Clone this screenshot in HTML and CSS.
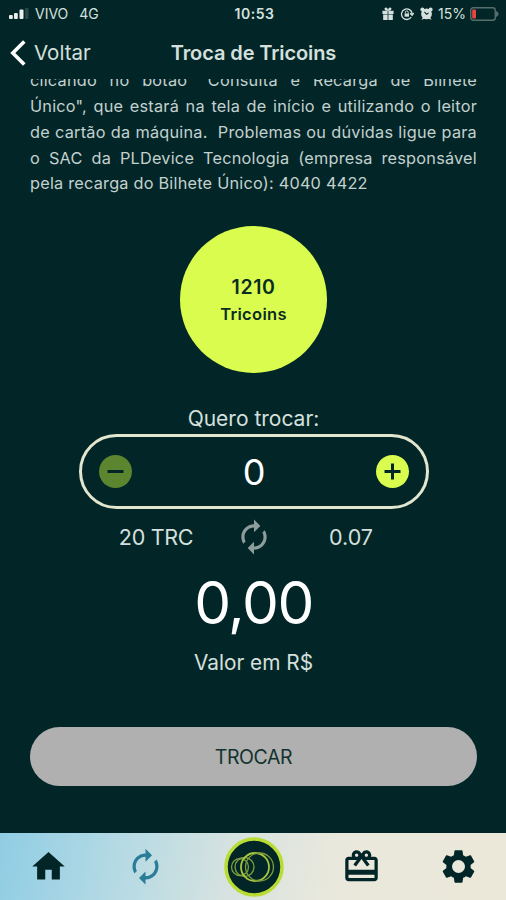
FILE: index.html
```html
<!DOCTYPE html>
<html lang="pt-BR">
<head>
    <meta charset="UTF-8">
    <meta name="viewport" content="width=device-width, initial-scale=1.0">
    <title>Troca de Tricoins</title>
    <link rel="stylesheet" href="styles.css">
</head>
<body>
    <div class="status-bar">
        <div class="status-left">
            <svg class="signal" viewBox="0 0 20 12">
                <rect x="0" y="7" width="3.8" height="4" rx="1" fill="#e8f0ee"/>
                <rect x="5" y="5" width="3.8" height="6" rx="1" fill="#e8f0ee"/>
                <rect x="10.5" y="1.5" width="4" height="9.5" rx="1" fill="#e8f0ee"/>
                <rect x="16" y="0" width="3.6" height="11" rx="1" fill="#264745"/>
            </svg>
            <span class="carrier">VIVO</span>
            <span>4G</span>
        </div>
        <div class="status-time">10:53</div>
        <div class="status-right">
            <svg class="icon-gift" viewBox="0 0 12 14" fill="currentColor">
                <path d="M0 4h5.6v3.500H0zM6.400 4H12v3.500H6.400zM.8 8.200h4.800V14H.8zM6.400 8.200h4.800V14H6.400z"/>
                <path d="M6 4.200C1.500 4.200 1.500.5 3.800.5 5.200.5 6 2 6 4.200zm0 0c4.500 0 4.500-3.700 2.200-3.700C6.800.5 6 2 6 4.200z"/>
            </svg>
            <svg class="icon-lock" viewBox="0 0 14 14" fill="none" stroke="currentColor" stroke-width="1.300">
                <path d="M11.200 10.200A5.300 5.300 0 1 1 12.100 6.600M10 6.200l2.100 2 1.700-2.200"/>
                <rect x="4.600" y="6.500" width="4.400" height="3.200" fill="currentColor" stroke="none"/>
                <path d="M5.400 6.600V5.300a1.400 1.400 0 0 1 2.800 0v1.300" stroke-width="1"/>
            </svg>
            <svg class="icon-alarm" viewBox="0 0 14 14">
                <g fill="currentColor">
                    <circle cx="7" cy="7.500" r="5.800"/>
                    <circle cx="2.600" cy="2.800" r="2.200"/>
                    <circle cx="11.400" cy="2.800" r="2.200"/>
                    <path d="M1.500 13.800l2-3.300 2 2zM12.500 13.800l-2-3.300-2 2z"/>
                </g>
                <path d="M4.800 5.300L7 7.800l2.400-1.500" fill="none" stroke="#022627" stroke-width="1.100"/>
            </svg>
            <span class="percent">15%</span>
            <svg class="battery" viewBox="0 0 30 14">
                <rect x=".75" y=".75" width="24.500" height="12.500" rx="2.500" fill="none" stroke="#566f6d" stroke-width="1.400"/>
                <path d="M26.500 4.500c2 .8 2 4.200 0 5z" fill="#566f6d" stroke="#566f6d"/>
                <rect x="2.200" y="2.400" width="3.800" height="9.200" rx="1" fill="#e8463c"/>
            </svg>
        </div>
    </div>

    <header class="header">
        <a class="back" href="#">
            <svg viewBox="0 0 16 26" fill="none" stroke="currentColor" stroke-width="3.600">
                <path d="M14.300 1.500L2.800 13l11.500 11.500"/>
            </svg>
            Voltar
        </a>
        <h1>Troca de Tricoins</h1>
    </header>

    <main class="content">
        <div class="info">
            <p class="line">clicando no botão "Consulta e Recarga de Bilhete</p>
            <p class="line">Único", que estará na tela de início e utilizando o leitor</p>
            <p class="line">de cartão da máquina.&nbsp; Problemas ou dúvidas ligue para</p>
            <p class="line">o SAC da PLDevice Tecnologia (empresa responsável</p>
            <p class="line last">pela recarga do Bilhete Único): 4040 4422</p>
        </div>

        <div class="balance">
            <strong>1210</strong>
            <span>Tricoins</span>
        </div>

        <div class="label">Quero trocar:</div>
        <div class="stepper">
            <button class="step minus" aria-label="Menos">
                <svg viewBox="0 0 33 33"><path d="M8.500 16.500h16"/></svg>
            </button>
            <span class="amount">0</span>
            <button class="step plus" aria-label="Mais">
                <svg viewBox="0 0 33 33"><path d="M8.500 16.500h16M16.500 8.500v16"/></svg>
            </button>
        </div>

        <div class="rate">
            <span>20 TRC</span>
            <svg class="renew" viewBox="0 0 24 24" fill="currentColor">
                <path d="M12 6v3l4-4-4-4v3c-4.420 0-8 3.580-8 8 0 1.570.46 3.030 1.240 4.260L6.700 14.800c-.45-.83-.7-1.790-.7-2.800 0-3.310 2.690-6 6-6zm6.760 1.740L17.300 9.200c.44.84.7 1.790.7 2.800 0 3.310-2.690 6-6 6v-3l-4 4 4 4v-3c4.420 0 8-3.580 8-8 0-1.570-.46-3.030-1.240-4.260z"/>
            </svg>
            <span>0.07</span>
        </div>

        <div class="total">0,00</div>
        <div class="currency">Valor em R$</div>

        <button class="submit">TROCAR</button>
    </main>

    <nav class="tab-bar">
        <a href="#">
            <svg class="tab-icon" viewBox="0 0 24 24" fill="currentColor"><path d="M10 20v-6h4v6h5v-8h3L12 3 2 12h3v8z"/></svg>
        </a>
        <a href="#" class="active">
            <svg class="tab-icon" viewBox="0 0 24 24" fill="currentColor">
                <path d="M12 6v3l4-4-4-4v3c-4.420 0-8 3.580-8 8 0 1.570.46 3.030 1.240 4.260L6.700 14.800c-.45-.83-.7-1.790-.7-2.800 0-3.310 2.690-6 6-6zm6.760 1.740L17.300 9.200c.44.84.7 1.790.7 2.800 0 3.310-2.690 6-6 6v-3l-4 4 4 4v-3c4.420 0 8-3.580 8-8 0-1.570-.46-3.030-1.240-4.260z"/>
            </svg>
        </a>
        <a href="#">
            <svg class="logo" viewBox="0 0 60 60" fill="none">
                <circle cx="30" cy="30" r="28" fill="#022627" stroke="#b9dc35" stroke-width="3.500"/>
                <g stroke="#7f9d3c" stroke-width="1.300">
                    <circle cx="16" cy="30" r="8.500"/>
                    <circle cx="20.500" cy="30" r="9.500"/>
                    <circle cx="31" cy="30" r="14" stroke="#a9c63c" stroke-width="1.800"/>
                    <circle cx="35.500" cy="30" r="14"/>
                </g>
            </svg>
        </a>
        <a href="#">
            <svg class="tab-icon" viewBox="0 0 24 24" fill="currentColor">
                <path d="M20 6h-2.180c.11-.31.18-.65.18-1 0-1.660-1.340-3-3-3-1.050 0-1.960.54-2.500 1.350l-.5.67-.5-.68C10.960 2.540 10.050 2 9 2 7.340 2 6 3.340 6 5c0 .35.07.69.18 1H4c-1.110 0-1.990.89-1.990 2L2 19c0 1.110.89 2 2 2h16c1.110 0 2-.89 2-2V8c0-1.110-.89-2-2-2zm-5-2c.55 0 1 .45 1 1s-.45 1-1 1-1-.45-1-1 .45-1 1-1zM9 4c.55 0 1 .45 1 1s-.45 1-1 1-1-.45-1-1 .45-1 1-1zm11 15H4v-2h16v2zm0-5H4V8h5.080L7 10.830 8.620 12 11 8.760l1-1.360 1 1.360L15.380 12 17 10.830 14.920 8H20v6z"/>
            </svg>
        </a>
        <a href="#">
            <svg class="tab-icon" viewBox="0 0 24 24" fill="currentColor">
                <path d="M19.430 12.980c.04-.32.07-.64.07-.98s-.03-.66-.07-.98l2.110-1.650c.19-.15.24-.42.12-.64l-2-3.460c-.12-.22-.39-.3-.61-.22l-2.490 1c-.52-.4-1.080-.73-1.690-.98l-.38-2.650C14.460 2.180 14.250 2 14 2h-4c-.25 0-.46.18-.49.42l-.38 2.650c-.61.25-1.170.59-1.690.98l-2.490-1c-.23-.09-.49 0-.61.22l-2 3.460c-.13.22-.07.49.12.64l2.110 1.650c-.04.32-.07.65-.07.98s.03.66.07.98l-2.110 1.650c-.19.15-.24.42-.12.64l2 3.460c.12.22.39.3.61.22l2.490-1c.52.4 1.080.73 1.690.98l.38 2.650c.03.24.24.42.49.42h4c.25 0 .46-.18.49-.42l.38-2.650c.61-.25 1.170-.59 1.690-.98l2.490 1c.23.09.49 0 .61-.22l2-3.460c.12-.22.07-.49-.12-.64l-2.110-1.650zM12 16a4 4 0 1 1 0-8 4 4 0 0 1 0 8z"/>
            </svg>
        </a>
    </nav>
</body>
</html>
```
FILE: styles.css
```css
* {
    box-sizing: border-box;
}

body {
    margin: 0;
    height: 900px;
    display: flex;
    flex-direction: column;
    overflow: hidden;
    background-color: #022627;
    color: #d5e0de;
    font-family: Inter, "Liberation Sans", sans-serif;
}

svg {
    display: block;
    flex-shrink: 0;
}

button {
    border: 0;
    padding: 0;
    font-family: inherit;
}

/* status bar */
.status-bar {
    height: 28px;
    flex-shrink: 0;
    display: grid;
    grid-template-columns: 1fr auto 1fr;
    align-items: center;
    padding: 0 6px 1px 9px;
    font-size: 14px;
}

.status-left,
.status-right {
    display: flex;
    align-items: center;
}

.signal {
    width: 20px;
    height: 12px;
    margin-right: 6px;
}

.carrier {
    margin-right: 11px;
}

.status-time {
    font-weight: 600;
    font-size: 14px;
    letter-spacing: 0.5px;
}

.status-right {
    justify-content: flex-end;
}

.icon-gift {
    width: 12px;
    height: 13px;
    margin-right: 6px;
}

.icon-lock {
    width: 14px;
    height: 14px;
    margin-right: 6px;
}

.icon-alarm {
    width: 13px;
    height: 13px;
    margin-right: 5px;
}

.percent {
    margin-right: 4px;
}

.battery {
    width: 30px;
    height: 14px;
}

/* header */
.header {
    height: 51px;
    flex-shrink: 0;
    display: grid;
    grid-template-columns: 1fr auto 1fr;
    align-items: center;
    padding: 0 9px 2px 10px;
}

.back {
    display: flex;
    align-items: center;
    gap: 8px;
    color: #d5e0de;
    font-size: 20.500px;
    text-decoration: none;
}

.back svg {
    width: 16px;
    height: 26px;
    color: #fff;
}

.header h1 {
    margin: 0;
    font-size: 20px;
    font-weight: 600;
    letter-spacing: -0.1px;
}

/* content */
.content {
    flex: 1;
    display: flex;
    flex-direction: column;
    align-items: center;
    padding: 0 29px 0 30px;
    overflow: hidden;
}

.info {
    width: 100%;
    height: 118px;
    flex-shrink: 0;
    display: flex;
    flex-direction: column;
    justify-content: flex-end;
    overflow: hidden;
    font-size: 16.300px;
    line-height: 25.700px;
    letter-spacing: 0.22px;
    color: #c3d1cf;
}

.line {
    margin: 0;
    text-align: justify;
    text-align-last: justify;
    white-space: nowrap;
}

.line.last {
    text-align-last: left;
}

.balance {
    width: 147px;
    height: 147px;
    flex-shrink: 0;
    margin-top: 29px;
    padding-top: 2px;
    display: flex;
    flex-direction: column;
    align-items: center;
    justify-content: center;
    border-radius: 50%;
    background-color: #d9fc4f;
    color: #0b2c22;
    font-size: 16.500px;
    font-weight: 600;
    line-height: 27px;
    letter-spacing: 0.3px;
}

.balance strong {
    font-size: 19.500px;
    font-weight: 600;
    letter-spacing: 0.6px;
}

.label {
    margin-top: 32px;
    font-size: 21px;
    line-height: 28px;
}

.stepper {
    width: 350px;
    height: 75px;
    flex-shrink: 0;
    margin-top: 1px;
    padding: 0 17px;
    display: flex;
    align-items: center;
    justify-content: space-between;
    border: 3px solid #e2e6cf;
    border-radius: 38px;
}

.step {
    width: 33px;
    height: 33px;
    border-radius: 50%;
    background-color: #d9fc4f;
}

.step.minus {
    background-color: #5b852f;
}

.step path {
    stroke: #022627;
    stroke-width: 3;
}

.amount {
    font-size: 36px;
    letter-spacing: -1px;
    color: #fff;
}

.rate {
    width: 350px;
    margin-top: 9px;
    display: grid;
    grid-template-columns: 1fr 40px 1fr;
    align-items: center;
    justify-items: center;
    font-size: 21.500px;
}

.rate span:first-child {
    letter-spacing: -0.3px;
}

.renew {
    width: 38px;
    height: 38px;
    color: #8f9c9c;
}

.total {
    margin-top: 11px;
    font-size: 58.500px;
    line-height: 72px;
    letter-spacing: -1.5px;
    color: #fff;
}

.currency {
    margin-top: 10px;
    font-size: 20.800px;
    line-height: 28px;
}

.submit {
    width: 447px;
    height: 59px;
    flex-shrink: 0;
    margin-top: 50px;
    border-radius: 30px;
    background-color: #b0b0b0;
    color: #12332f;
    font-size: 19.500px;
    letter-spacing: -0.4px;
}

/* bottom navigation */
.tab-bar {
    height: 67px;
    flex-shrink: 0;
    display: flex;
    justify-content: space-between;
    align-items: center;
    padding: 0 28px 0 29px;
    background: linear-gradient(100deg, #8fcde4 0%, #b5dae4 24%, #d5e2e0 45%, #e9e8dc 65%, #ebe8d9 100%);
    color: #022627;
}

.tab-bar a {
    color: inherit;
}

.tab-bar .active {
    color: #2a7d97;
}

.tab-icon {
    width: 39px;
    height: 39px;
}

.logo {
    width: 60px;
    height: 60px;
}
```
